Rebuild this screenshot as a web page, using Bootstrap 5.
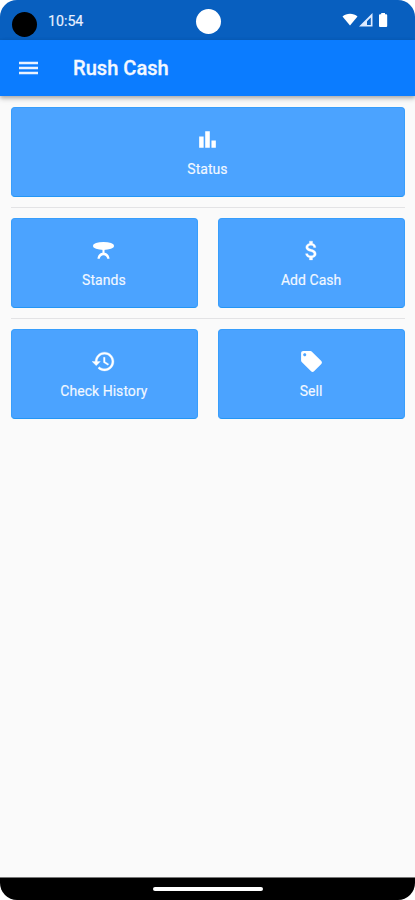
<!DOCTYPE html>
<html lang="en">
<head>
<meta charset="utf-8">
<meta name="viewport" content="width=device-width, initial-scale=1">
<title>Rush Cash</title>
<link href="https://cdn.jsdelivr.net/npm/bootstrap@5.3.0/dist/css/bootstrap.min.css" rel="stylesheet">
<style>
  body { font-family: Roboto, "Liberation Sans", sans-serif; background: #fff; }
  .phone { height: 900px; background: #fafafa; border-radius: 17px; }
  .status-strip { height: 39.5px; background: #085fbf; padding: 0 27px 0 12px; }
  .lens { width: 25px; height: 25px; background: #000; margin-top: 9px; }
  .clock { font-size: 14.2px; line-height: 20px; color: #e9f1ff; margin: 2px 0 0 11px; -webkit-text-stroke: .15px #e9f1ff; }
  .camera { width: 25px; height: 25px; left: 195.5px; top: 9px; }
  .app-bar { height: 56.5px; background: #0b7cff; box-shadow: 0 2px 4px rgba(0,0,0,.26), 0 3px 6px rgba(0,0,0,.1); padding: 0 19px; z-index: 1; }
  .app-title { font-size: 20.1px; line-height: 24px; font-weight: 500; color: #f3f8ff; margin: 1px 0 0 35px; -webkit-text-stroke: .3px #f3f8ff; }
  .menu-btn { width: 19px; height: 14px; }
  .actions { padding: 10.5px 10px 0 11px; }
  .tile { height: 90.5px; border: 1px solid #389efc; border-bottom: 1.5px solid #2496f5; border-radius: 4px; background: #4ba3ff; color: #f2f8ff; font-size: 14px; line-height: 18px; padding: 19px 1px 0 0; }
  .tile:hover { background: #4397f2; color: #fff; }
  .tile svg { width: 25px; height: 25px; fill: #fff; margin-bottom: 8.5px; }
  .tile span { -webkit-text-stroke: .15px #f2f8ff; letter-spacing: .04px; }
  .rule { height: 1.5px; background: #e3e3e5; margin: 9.5px 0 9.5px; }
  .pair { --bs-gutter-x: 20.5px; }
  .nav-strip { height: 23.5px; background: #000; border-top: 1px solid #777; }
  .handle { width: 110px; height: 4.5px; background: #fff; }
</style>
</head>
<body>
<div class="phone d-flex flex-column overflow-hidden position-relative">
  <div class="status-strip d-flex align-items-center flex-shrink-0">
    <span class="lens rounded-circle"></span>
    <span class="clock">10:54</span>
    <span class="camera rounded-circle bg-white position-absolute"></span>
    <svg class="ms-auto" width="46" height="16" viewBox="0 0 46 16" fill="#fff" aria-hidden="true">
      <path d="M.5 4.500C4.500 .9 11.500 .9 15.500 4.500L8 13.500z"/>
      <path d="M30.500 1v13.500H17zM28.800 5.500L25 9.300V13h3.800z" fill="#dceaff" fill-rule="evenodd"/>
      <path d="M38 2.300h1.200V1h3.800v1.300h1.200q1 0 1 1V14q0 1-1 1H38q-1 0-1-1V3.300q0-1 1-1z"/>
    </svg>
  </div>
  <header class="app-bar d-flex align-items-center flex-shrink-0 position-relative">
    <button class="btn p-0 border-0 d-flex" aria-label="Menu">
      <svg class="menu-btn" viewBox="0 0 19 14" stroke="#e9f2ff" stroke-width="2.300"><path d="M0 2h19M0 7h19M0 12h19"/></svg>
    </button>
    <h1 class="app-title">Rush Cash</h1>
  </header>
  <main class="actions flex-grow-1">
    <button class="btn tile w-100 d-flex flex-column align-items-center">
      <svg viewBox="0 0 24 24"><path d="M4 9h4.300v11H4zM15.800 13H20v7h-4.200zM9.800 4h4.400v16H9.800z"/></svg>
      <span>Status</span>
    </button>
    <div class="rule"></div>
    <div class="row pair">
      <div class="col-6">
        <button class="btn tile w-100 d-flex flex-column align-items-center">
          <svg viewBox="0 0 24 24"><ellipse cx="12" cy="7.600" rx="10.200" ry="3.800"/><path d="M11 10.500h2v3.700c2.500.2 4.500 2.200 4.800 5.800h-2.200c-.4-2.300-1.700-3.500-3.600-3.500S8.800 17.700 8.400 20H6.200c.3-3.600 2.300-5.600 4.800-5.800z"/></svg>
          <span>Stands</span>
        </button>
      </div>
      <div class="col-6">
        <button class="btn tile w-100 d-flex flex-column align-items-center">
          <svg viewBox="0 0 24 24" stroke="#fff" stroke-width=".3"><path d="M11.800 10.900c-2.270-.59-3-1.200-3-2.150 0-1.090 1.010-1.850 2.700-1.850 1.780 0 2.440.85 2.500 2.100h2.210c-.07-1.720-1.120-3.300-3.210-3.810V3h-3v2.160c-1.940.42-3.500 1.680-3.500 3.610 0 2.310 1.910 3.460 4.700 4.130 2.500.6 3 1.480 3 2.410 0 .69-.49 1.790-2.700 1.790-2.060 0-2.870-.92-2.980-2.100h-2.200c.12 2.190 1.760 3.420 3.680 3.830V21h3v-2.150c1.950-.37 3.500-1.500 3.500-3.550 0-2.840-2.430-3.810-4.700-4.400z"/></svg>
          <span>Add Cash</span>
        </button>
      </div>
    </div>
    <div class="rule"></div>
    <div class="row pair">
      <div class="col-6">
        <button class="btn tile w-100 d-flex flex-column align-items-center">
          <svg viewBox="0 0 24 24" stroke="#fff" stroke-width=".3"><path d="M13 3c-4.970 0-9 4.030-9 9H1l3.890 3.890.07.14L9 12H6c0-3.870 3.130-7 7-7s7 3.130 7 7-3.130 7-7 7c-1.930 0-3.680-.79-4.940-2.060l-1.420 1.420C8.270 19.990 10.510 21 13 21c4.970 0 9-4.030 9-9s-4.030-9-9-9zm-1 5v5l4.280 2.540.72-1.210-3.500-2.080V8H12z"/></svg>
          <span>Check History</span>
        </button>
      </div>
      <div class="col-6">
        <button class="btn tile w-100 d-flex flex-column align-items-center">
          <svg viewBox="0 0 24 24"><path d="M21.410 11.580l-9-9C12.050 2.220 11.550 2 11 2H4c-1.100 0-2 .9-2 2v7c0 .55.220 1.050.59 1.420l9 9c.36.36.86.58 1.410.58.550 0 1.050-.22 1.410-.59l7-7c.37-.36.59-.86.59-1.410 0-.55-.23-1.060-.59-1.420zM5.500 7C4.670 7 4 6.330 4 5.500S4.670 4 5.500 4 7 4.670 7 5.500 6.330 7 5.500 7z"/></svg>
          <span>Sell</span>
        </button>
      </div>
    </div>
  </main>
  <footer class="nav-strip d-flex align-items-center justify-content-center flex-shrink-0">
    <span class="handle rounded-pill"></span>
  </footer>
</div>
<script src="https://cdn.jsdelivr.net/npm/bootstrap@5.3.0/dist/js/bootstrap.bundle.min.js"></script>
</body>
</html>
